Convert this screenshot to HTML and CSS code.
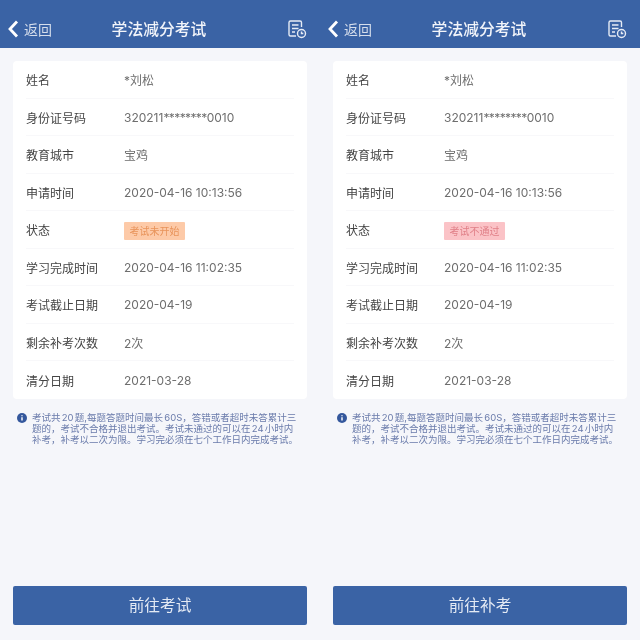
FILE: index.html
```html
<!DOCTYPE html>
<html lang="zh-CN">
<head>
<meta charset="utf-8">
<title>学法减分考试</title>
<link rel="stylesheet" href="styles.css">
</head>
<body>
<main class="page">
  <section class="phone">
    <header class="nav">
      <div class="back">
        <svg class="chev" viewBox="0 0 12 20"><path d="M10 2.500 3 10 10 17.500"/></svg>
        <span>返回</span>
      </div>
      <h1 class="title">学法减分考试</h1>
      <svg class="rec" viewBox="0 0 20 20"><path d="M14.500 8V3.500Q14.500 2 13 2H3.500Q2 2 2 3.500V15.500Q2 17 3.500 17H9M5 6h6.500M5 9.500h6.500M5 13h3"/><circle cx="14.500" cy="14.500" r="4"/><path d="M14.500 12.500v2h1.800"/></svg>
    </header>
    <div class="card">
      <div class="row"><span class="label">姓名</span><span class="value">*刘松</span></div>
      <div class="row"><span class="label">身份证号码</span><span class="value">320211<span class="mask">********</span>0010</span></div>
      <div class="row"><span class="label">教育城市</span><span class="value">宝鸡</span></div>
      <div class="row"><span class="label">申请时间</span><span class="value">2020-04-16 10:13:56</span></div>
      <div class="row"><span class="label">状态</span><span class="badge badge-orange">考试未开始</span></div>
      <div class="row"><span class="label">学习完成时间</span><span class="value">2020-04-16 11:02:35</span></div>
      <div class="row"><span class="label">考试截止日期</span><span class="value">2020-04-19</span></div>
      <div class="row"><span class="label">剩余补考次数</span><span class="value">2次</span></div>
      <div class="row"><span class="label">清分日期</span><span class="value">2021-03-28</span></div>
    </div>
    <div class="note">
      <svg class="info" viewBox="0 0 12 12"><circle cx="6" cy="6" r="6"/><path d="M6 5.200v3.800M6 2.600v1.300"/></svg>
      <p>考试共 20 题,每题答题时间最长 60S，答错或者超时未答累计三<br>题的，考试不合格并退出考试。考试未通过的可以在 24 小时内<br>补考，补考以二次为限。学习完必须在七个工作日内完成考试。</p>
    </div>
    <button class="cta">前往考试</button>
  </section>
  <section class="phone">
    <header class="nav">
      <div class="back">
        <svg class="chev" viewBox="0 0 12 20"><path d="M10 2.500 3 10 10 17.500"/></svg>
        <span>返回</span>
      </div>
      <h1 class="title">学法减分考试</h1>
      <svg class="rec" viewBox="0 0 20 20"><path d="M14.500 8V3.500Q14.500 2 13 2H3.500Q2 2 2 3.500V15.500Q2 17 3.500 17H9M5 6h6.500M5 9.500h6.500M5 13h3"/><circle cx="14.500" cy="14.500" r="4"/><path d="M14.500 12.500v2h1.800"/></svg>
    </header>
    <div class="card">
      <div class="row"><span class="label">姓名</span><span class="value">*刘松</span></div>
      <div class="row"><span class="label">身份证号码</span><span class="value">320211<span class="mask">********</span>0010</span></div>
      <div class="row"><span class="label">教育城市</span><span class="value">宝鸡</span></div>
      <div class="row"><span class="label">申请时间</span><span class="value">2020-04-16 10:13:56</span></div>
      <div class="row"><span class="label">状态</span><span class="badge badge-red">考试不通过</span></div>
      <div class="row"><span class="label">学习完成时间</span><span class="value">2020-04-16 11:02:35</span></div>
      <div class="row"><span class="label">考试截止日期</span><span class="value">2020-04-19</span></div>
      <div class="row"><span class="label">剩余补考次数</span><span class="value">2次</span></div>
      <div class="row"><span class="label">清分日期</span><span class="value">2021-03-28</span></div>
    </div>
    <div class="note">
      <svg class="info" viewBox="0 0 12 12"><circle cx="6" cy="6" r="6"/><path d="M6 5.200v3.800M6 2.600v1.300"/></svg>
      <p>考试共 20 题,每题答题时间最长 60S，答错或者超时未答累计三<br>题的，考试不合格并退出考试。考试未通过的可以在 24 小时内<br>补考，补考以二次为限。学习完必须在七个工作日内完成考试。</p>
    </div>
    <button class="cta">前往补考</button>
  </section>
</main>
</body>
</html>
```
FILE: styles.css
```css
* { box-sizing: border-box; }
html, body { margin: 0; padding: 0; }
body { width: 640px; height: 640px; overflow: hidden; background: #f5f6fa; font-family: Inter, "Noto Sans CJK SC", sans-serif; }
.page { display: grid; grid-template-columns: 320px 320px; height: 640px; filter: blur(0.35px); }
.phone { display: flex; flex-direction: column; height: 640px; background: #f5f6fa; }
.nav { display: grid; grid-template-columns: 1fr auto 1fr; align-items: center; height: 48px; padding: 10px 13px 0 7px; background: #3a63a5; color: #fff; }
.back { display: flex; align-items: center; gap: 5px; font-size: 14px; color: #d5deec; }
.chev { width: 12px; height: 20px; fill: none; stroke: #fff; stroke-width: 2.800; }
.title { margin: 0 0 0 4px; font-size: 15.800px; font-weight: 500; color: #f2f5fa; line-height: 20px; font-family: "Noto Sans CJK SC", sans-serif; }
.rec { justify-self: end; width: 20px; height: 20px; fill: none; stroke: #e6ecf5; stroke-width: 1.400; }
.card { display: flex; flex-direction: column; margin: 13.250px 13px 0; padding: 0 13px; background: #fff; border-radius: 4px; }
.row { display: flex; align-items: center; height: 37.500px; border-bottom: 1px solid #f8f8fa; }
.row:last-child { border-bottom: 0; }
.label { width: 98px; font-size: 12px; color: #444; font-family: "Noto Sans CJK SC", sans-serif; }
.value { font-size: 12px; color: #6e6e6e; }
.mask { letter-spacing: -0.600px; }
.badge { margin-top: 2px; padding: 0 5.500px; height: 18px; line-height: 18px; font-size: 10px; border-radius: 1px; font-family: "Noto Sans CJK SC", sans-serif; }
.badge-orange { background: #fdcaa8; color: #e8935a; }
.badge-red { background: #fbc3c7; color: #e07f87; }
.note { display: flex; gap: 5px; margin: 13.500px 13px 0 17px; }
.info { flex: none; width: 10px; height: 10px; margin-top: 1px; }
.info circle { fill: #34579c; }
.info path { fill: none; stroke: #fff; stroke-width: 1.700; }
.note p { margin: 0; font-size: 9.500px; line-height: 11px; color: #6a7bab; white-space: nowrap; word-spacing: -1.400px; }
.cta { display: block; width: 294px; height: 39px; margin: auto 13px 15px; padding: 0 0 3px; border: 0; border-radius: 2px; background: #3a63a5; color: #e4eaf4; font: 400 15.700px "Noto Sans CJK SC", sans-serif; }
```
